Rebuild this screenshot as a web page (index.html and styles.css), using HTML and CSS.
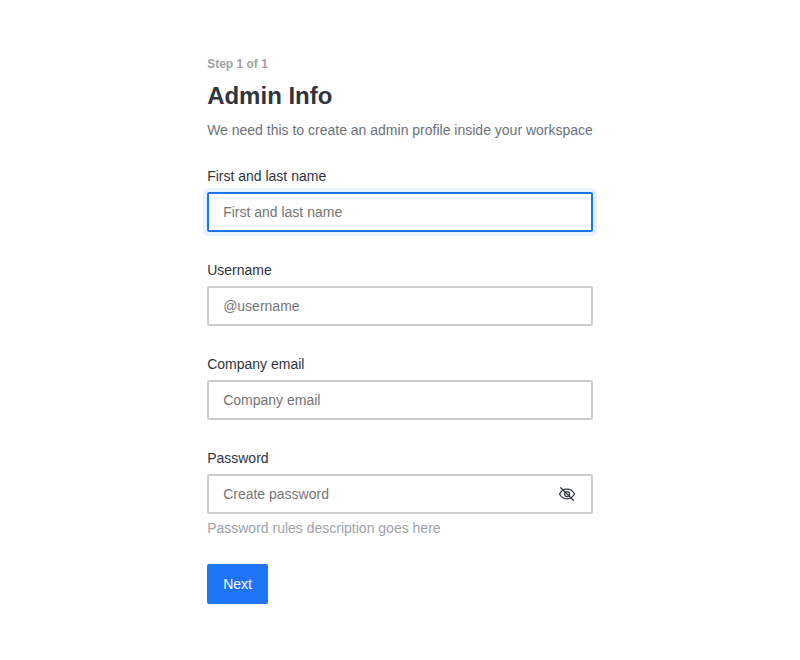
FILE: index.html
```html
<!DOCTYPE html>
<html lang="en">
<head>
<meta charset="utf-8">
<title>Admin Info</title>
<link rel="stylesheet" href="styles.css">
</head>
<body>
<form class="form">
  <div class="step">Step 1 of 1</div>
  <h1 class="title">Admin Info</h1>
  <p class="subtitle">We need this to create an admin profile inside your workspace</p>
  <div class="field">
    <label class="label" for="name">First and last name</label>
    <div class="box box-focus"><input class="input" id="name" type="text" placeholder="First and last name"></div>
  </div>
  <div class="field">
    <label class="label" for="username">Username</label>
    <div class="box"><input class="input" id="username" type="text" placeholder="@username"></div>
  </div>
  <div class="field">
    <label class="label" for="email">Company email</label>
    <div class="box"><input class="input" id="email" type="email" placeholder="Company email"></div>
  </div>
  <div class="field field-last">
    <label class="label" for="password">Password</label>
    <div class="box">
      <input class="input" id="password" type="password" placeholder="Create password">
      <svg class="eye" viewBox="0 0 20 20" fill="none" stroke="currentColor" stroke-width="1.25" stroke-linecap="round" stroke-linejoin="round">
        <path d="M2.500 10C4.200 6.800 6.800 5.200 10 5.200s5.800 1.600 7.500 4.800c-1.700 3.200-4.300 4.800-7.500 4.800S4.200 13.200 2.500 10z"/>
        <circle cx="10" cy="10" r="2.500"/>
        <path d="M3.700 3.700l12.600 12.600"/>
      </svg>
    </div>
    <div class="hint">Password rules description goes here</div>
  </div>
  <button class="next" type="button">Next</button>
</form>
</body>
</html>
```
FILE: styles.css
```css
* { box-sizing: border-box; }
body {
  margin: 0;
  background: #fff;
  font: 14px/20px "Liberation Sans", Arial, sans-serif;
  color: #2f343d;
}
.form { width: fit-content; margin: 0 auto; padding-top: 56px; }
.step { font-size: 12px; line-height: 16px; font-weight: 700; color: #9ea2a8; }
.title { margin: 8px 0; font-size: 24px; line-height: 32px; font-weight: 700; }
.subtitle { margin: 0 0 26px; color: #6c727a; white-space: nowrap; }
.field { margin-bottom: 28px; }
.field-last { margin-bottom: 26px; }
.label { display: block; margin-bottom: 6px; }
.box {
  display: flex;
  align-items: center;
  height: 40px;
  padding: 0 14px;
  border: 2px solid #cbced1;
  border-radius: 2px;
}
.box-focus { border-color: #1d74f5; box-shadow: 0 0 0 4px #e8f2ff; }
.input {
  flex: 1;
  min-width: 0;
  padding: 0;
  border: 0;
  outline: 0;
  background: none;
  font: inherit;
  color: inherit;
}
.eye { width: 20px; height: 20px; }
.hint { margin-top: 4px; color: #9ea2a8; }
.next {
  display: block;
  height: 40px;
  padding: 0 16px;
  border: 0;
  border-radius: 2px;
  background: #1d74f5;
  font: inherit;
  color: #fff;
}
```
